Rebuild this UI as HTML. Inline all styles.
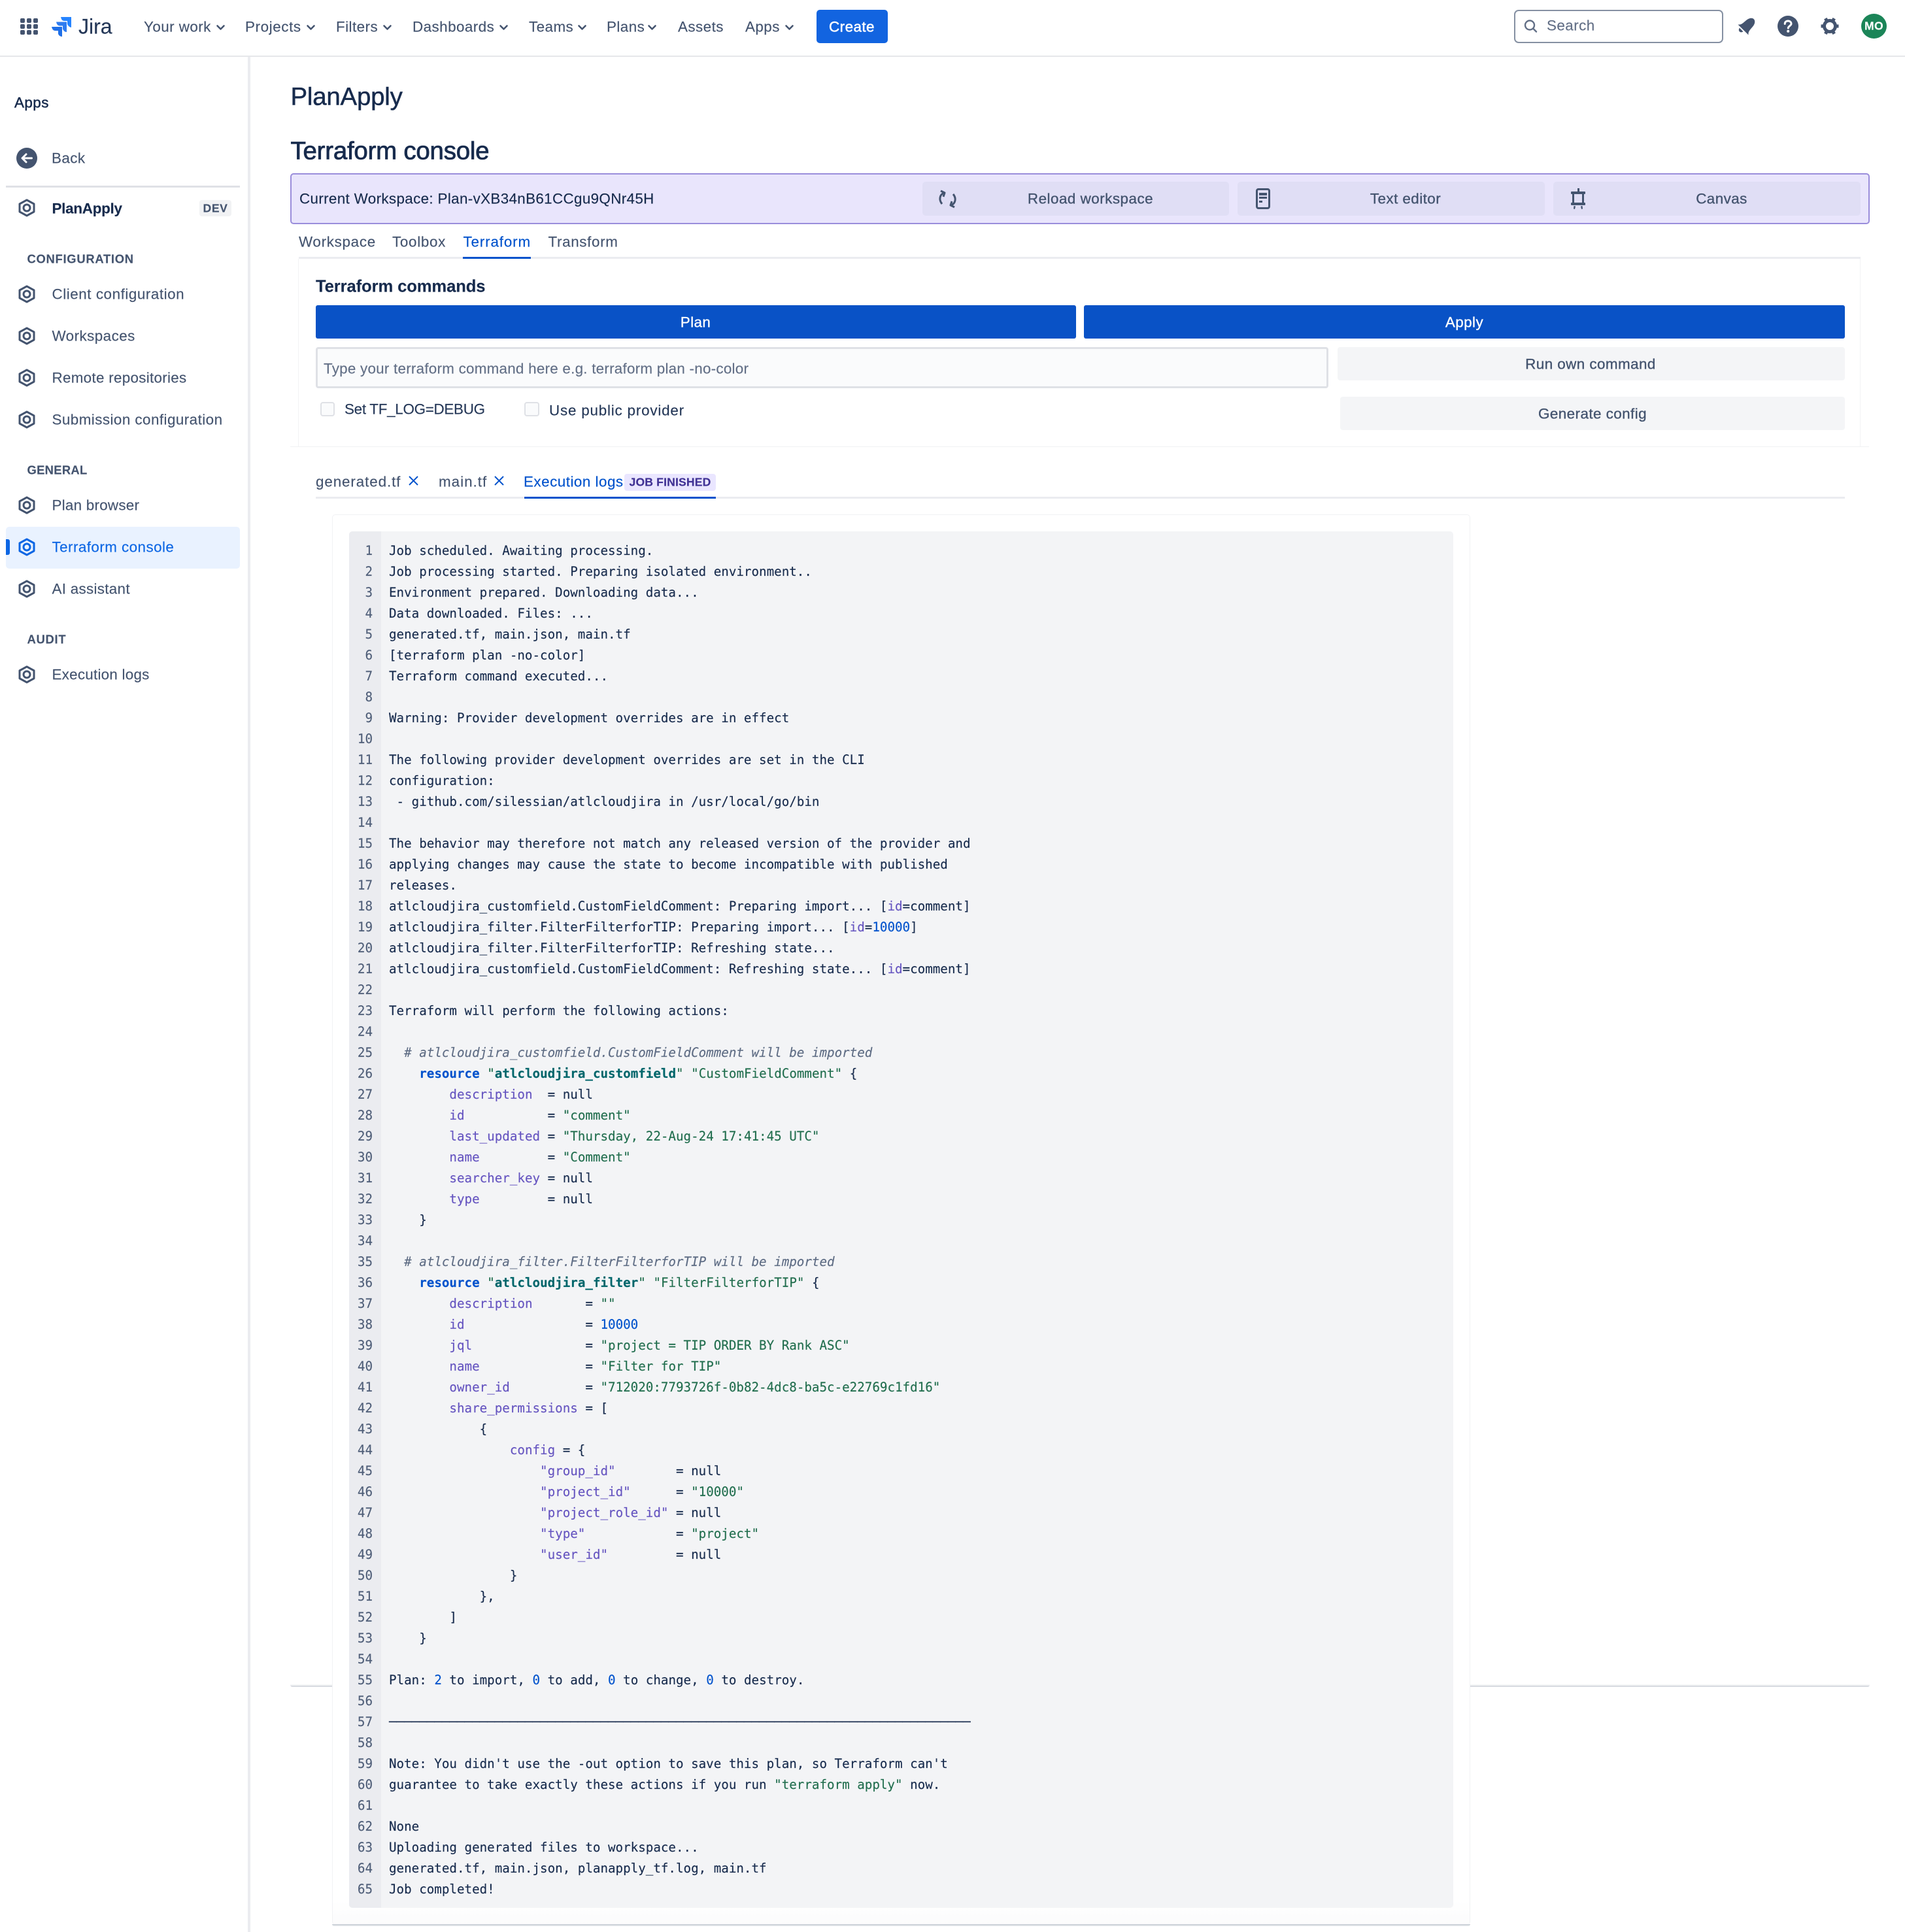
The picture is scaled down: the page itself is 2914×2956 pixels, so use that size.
<!DOCTYPE html>
<html lang="en"><head><meta charset="utf-8"><title>Terraform console</title>
<style>
html,body{margin:0;padding:0;background:#fff}
#r{position:relative;width:2914px;height:2956px;overflow:hidden;background:#fff;font-family:"Liberation Sans",sans-serif;font-size:22.4px;letter-spacing:.45px;color:#44546f;-webkit-text-stroke:.15px currentColor}
.b{position:absolute;box-sizing:border-box}
.t{position:absolute;white-space:nowrap;line-height:1;transform:translateY(calc(-50% + .5px))}
.c{position:absolute;white-space:nowrap;line-height:1;transform:translate(-50%,calc(-50% + .5px))}
.m{-webkit-text-stroke:.5px currentColor}
.h{color:#172b4d}
svg{position:absolute;overflow:visible}
.sec{font-size:18.4px;font-weight:700;letter-spacing:.72px}
.btn{background:#e0def5;border-radius:5px;top:278px;height:52px}
#code,#nums{position:absolute;top:827px;font-family:"DejaVu Sans Mono",monospace;font-size:19.2px;line-height:32px;letter-spacing:0;white-space:pre;margin:0}
#code{left:595px;color:#172b4d}
#nums{left:534px;width:36px;text-align:right;color:#505f79}
.s{color:#216e4e}.p{color:#6554c0}.n{color:#0052cc}.k{color:#0052cc;font-weight:700}.q{color:#00666b;font-weight:700}.o{color:#5e6c84;font-style:italic}
</style></head><body><div id="r">
<svg width="0" height="0" style="position:absolute"><defs>
<g id="hex"><path d="M13 2 L24 8 V20 L13 26 L2 20 V8 Z" fill="none" stroke="currentColor" stroke-width="3" stroke-linejoin="round"/><circle cx="13" cy="14" r="5" fill="none" stroke="currentColor" stroke-width="3"/></g>
<path id="chev" d="M1.5 1.5 L6.5 6.5 L11.5 1.5" fill="none" stroke="#44546f" stroke-width="2.6" stroke-linecap="round" stroke-linejoin="round"/>
<path id="x" d="M1 1 L14 14 M14 1 L1 14" fill="none" stroke="#0052cc" stroke-width="2"/>
</defs></svg>

<!-- top nav -->
<div class="b" style="left:0;top:85px;width:2914px;height:2px;background:#e6e7ea"></div>
<svg style="left:31px;top:28px" width="27" height="25" fill="#44546f">
<rect x="0" y="0" width="7" height="7" rx="2"/><rect x="10" y="0" width="7" height="7" rx="2"/><rect x="20" y="0" width="7" height="7" rx="2"/>
<rect x="0" y="9" width="7" height="7" rx="2"/><rect x="10" y="9" width="7" height="7" rx="2"/><rect x="20" y="9" width="7" height="7" rx="2"/>
<rect x="0" y="18" width="7" height="7" rx="2"/><rect x="10" y="18" width="7" height="7" rx="2"/><rect x="20" y="18" width="7" height="7" rx="2"/>
</svg>
<svg style="left:79px;top:26px" width="30" height="30" viewBox="0 0 30 30">
<path d="M14 0 H30 V16 Q26 15.5 24 11 V6 H19 Q15 6 14 0Z" fill="#2684ff"/>
<path d="M7 7.500 H23 V23 Q19 23 17 18.500 V13.500 H12 Q8 13 7 7.500Z" fill="#2f7cf0"/>
<path d="M0 15 H16 V30 Q12 30 10 26 V21 H5 Q1 20.500 0 15Z" fill="#1f6fe8"/>
</svg>
<div class="t" style="left:120px;top:40px;font-size:32px;letter-spacing:0;color:#253858">Jira</div>

<div class="t" style="left:220px;top:41px">Your work</div><svg style="left:331px;top:38px" width="13" height="8"><use href="#chev"/></svg>
<div class="t" style="left:375px;top:41px;letter-spacing:.6px">Projects</div><svg style="left:469px;top:38px" width="13" height="8"><use href="#chev"/></svg>
<div class="t" style="left:514px;top:41px">Filters</div><svg style="left:586px;top:38px" width="13" height="8"><use href="#chev"/></svg>
<div class="t" style="left:631px;top:41px">Dashboards</div><svg style="left:764px;top:38px" width="13" height="8"><use href="#chev"/></svg>
<div class="t" style="left:809px;top:41px">Teams</div><svg style="left:884px;top:38px" width="13" height="8"><use href="#chev"/></svg>
<div class="t" style="left:928px;top:41px">Plans</div><svg style="left:991px;top:38px" width="13" height="8"><use href="#chev"/></svg>
<div class="t" style="left:1037px;top:41px">Assets</div>
<div class="t" style="left:1140px;top:41px">Apps</div><svg style="left:1201px;top:38px" width="13" height="8"><use href="#chev"/></svg>
<div class="b" style="left:1249px;top:15px;width:109px;height:51px;background:#1264e0;border-radius:5px"></div>
<div class="c m" style="left:1303px;top:41px;color:#fff">Create</div>

<div class="b" style="left:2316px;top:15px;width:320px;height:51px;border:2px solid #8590a2;border-radius:7px"></div>
<svg style="left:2331px;top:30px" width="22" height="20" fill="none" stroke="#626f86" stroke-width="2.400"><circle cx="9" cy="8.500" r="7"/><path d="M14 13.500 L19 18.500" stroke-linecap="round"/></svg>
<div class="t" style="left:2366px;top:39px;color:#626f86">Search</div>
<svg style="left:2656px;top:26px" width="30" height="28" viewBox="0 0 30 28" fill="#44546f"><g transform="translate(10.500 19.500) rotate(45)"><path d="M-11.400 0 C-7 -3 -7.500 -8 -7 -13 C-6.500 -20 -3 -23 0 -23 C3 -23 6.500 -20 7 -13 C7.500 -8 7 -3 11.400 0 Z"/><path d="M-6 2 H2 Q1 6 -2 6 Q-5 6 -6 2Z"/></g></svg>
<svg style="left:2719px;top:24px" width="32" height="32" viewBox="0 0 32 32"><circle cx="16" cy="16" r="16" fill="#44546f"/><path d="M11.200 12.500 C11.200 9.500 13.500 8 16 8 C18.800 8 21 9.800 21 12.300 C21 15.500 16.300 15.800 16.300 19" fill="none" stroke="#fff" stroke-width="3" stroke-linecap="round"/><circle cx="16.200" cy="23.800" r="2" fill="#fff"/></svg>
<svg style="left:2785px;top:26px" width="28" height="28" viewBox="0 0 28 28"><circle cx="14" cy="14" r="8.500" fill="none" stroke="#44546f" stroke-width="5"/><g stroke="#44546f" stroke-width="5"><path d="M0.500 14 H4"/><path d="M24 14 H27.500"/><path d="M7.250 2.300 L9 5.300"/><path d="M19 22.700 L20.750 25.700"/><path d="M7.250 25.700 L9 22.700"/><path d="M19 5.300 L20.750 2.300"/></g></svg>
<div class="b" style="left:2847px;top:21px;width:39px;height:38px;border-radius:50%;background:#1b8558"></div>
<div class="c" style="left:2866.500px;top:40px;color:#fff;font-size:17.600px;font-weight:700;letter-spacing:.3px">MO</div>

<!-- sidebar -->
<div class="b" style="left:379px;top:87px;width:4px;height:2869px;background:#ebecf0"></div>
<div class="t h m" style="left:22px;top:157px">Apps</div>
<svg style="left:25px;top:226px" width="32" height="32" viewBox="0 0 32 32"><circle cx="16" cy="16" r="16" fill="#44546f"/><path d="M23.500 16 H10 M15 10 L9 16 L15 22" fill="none" stroke="#fff" stroke-width="3" stroke-linecap="round" stroke-linejoin="round"/></svg>
<div class="t" style="left:79px;top:242px">Back</div>
<div class="b" style="left:9px;top:284px;width:358px;height:3px;background:#dfe1e6"></div>

<svg style="left:28px;top:304px;color:#44546f" width="26" height="28"><use href="#hex"/></svg>
<div class="t h" style="left:79.500px;top:319px;font-weight:700;letter-spacing:-.25px">PlanApply</div>
<div class="b" style="left:305px;top:306px;width:49px;height:25px;background:#f1f2f4;border-radius:4px"></div>
<div class="c" style="left:329.500px;top:319px;font-size:17.600px;font-weight:700;letter-spacing:.6px">DEV</div>

<div class="t sec" style="left:41.500px;top:396px">CONFIGURATION</div>
<svg style="left:28px;top:436px;color:#44546f" width="26" height="28"><use href="#hex"/></svg><div class="t" style="left:79.500px;top:450px;letter-spacing:.55px">Client configuration</div>
<svg style="left:28px;top:500px;color:#44546f" width="26" height="28"><use href="#hex"/></svg><div class="t" style="left:79.500px;top:514px">Workspaces</div>
<svg style="left:28px;top:564px;color:#44546f" width="26" height="28"><use href="#hex"/></svg><div class="t" style="left:79.500px;top:578px;letter-spacing:.3px">Remote repositories</div>
<svg style="left:28px;top:628px;color:#44546f" width="26" height="28"><use href="#hex"/></svg><div class="t" style="left:79.500px;top:642px">Submission configuration</div>
<div class="t sec" style="left:41.500px;top:719px;letter-spacing:.3px">GENERAL</div>
<svg style="left:28px;top:759px;color:#44546f" width="26" height="28"><use href="#hex"/></svg><div class="t" style="left:79.500px;top:773px;letter-spacing:.25px">Plan browser</div>
<div class="b" style="left:9px;top:806px;width:358px;height:64px;background:#e9f2ff;border-radius:5px"></div>
<div class="b" style="left:9px;top:825px;width:6px;height:24px;background:#0c66e4;border-radius:0 3px 3px 0"></div>
<svg style="left:28px;top:823px;color:#0c66e4" width="26" height="28"><use href="#hex"/></svg><div class="t" style="left:79.500px;top:837px;color:#0c66e4">Terraform console</div>
<svg style="left:28px;top:887px;color:#44546f" width="26" height="28"><use href="#hex"/></svg><div class="t" style="left:79.500px;top:901px;letter-spacing:.3px">AI assistant</div>
<div class="t sec" style="left:41.500px;top:978px">AUDIT</div>
<svg style="left:28px;top:1018px;color:#44546f" width="26" height="28"><use href="#hex"/></svg><div class="t" style="left:79.500px;top:1032px;letter-spacing:.25px">Execution logs</div>

<!-- main heading -->
<div class="t h m" style="left:444.500px;top:147.500px;font-size:38.400px;letter-spacing:-.2px">PlanApply</div>
<div class="t h m" style="left:444.500px;top:230.500px;font-size:38.400px;letter-spacing:-.2px;-webkit-text-stroke:.8px #172b4d">Terraform console</div>

<!-- workspace bar -->
<div class="b" style="left:444px;top:265px;width:2416px;height:78px;background:#e9e5fc;border:2px solid #9a8ddb;border-radius:5px"></div>
<div class="t h" style="left:458px;top:304px;letter-spacing:.35px">Current Workspace: Plan-vXB34nB61CCgu9QNr45H</div>
<div class="b btn" style="left:1411px;width:469px"></div>
<div class="b btn" style="left:1893px;width:470px"></div>
<div class="b btn" style="left:2376px;width:470px"></div>
<svg style="left:1435px;top:291px" width="29" height="27" viewBox="0 0 29 27" fill="none" stroke="#44546f" stroke-width="3"><path d="M6 21 C1 15 2 7 9 4"/><path d="M4 1 L10 4 L8 10" stroke-linejoin="round"/><path d="M23 6 C28 12 27 20 20 23"/><path d="M25 26 L19 23 L21 17" stroke-linejoin="round"/></svg>
<div class="c m" style="left:1668px;top:304px;-webkit-text-stroke:.35px #44546f;letter-spacing:.5px">Reload workspace</div>
<svg style="left:1921px;top:288px" width="22" height="32" viewBox="0 0 22 32"><rect x="1.500" y="1.500" width="19" height="29" rx="2.500" fill="none" stroke="#44546f" stroke-width="3"/><rect x="5" y="7" width="12" height="4" fill="#44546f"/><rect x="5" y="13" width="12" height="3" fill="#44546f"/><rect x="5" y="19" width="5" height="3" fill="#44546f"/></svg>
<div class="c m" style="left:2150px;top:304px;-webkit-text-stroke:.35px #44546f">Text editor</div>
<svg style="left:2403px;top:288px" width="22" height="32" viewBox="0 0 22 32" fill="#44546f"><rect x="10" y="0" width="3" height="6"/><rect x="0" y="5" width="22" height="4" rx="1"/><rect x="2" y="7" width="3" height="17"/><rect x="17" y="7" width="3" height="17"/><rect x="0" y="22" width="22" height="4" rx="1"/><path d="M4.500 27 L7 27.500 L6 32 L4 31.500Z M15 27.500 L17.500 27 L18 31.500 L16 32Z"/></svg>
<div class="c m" style="left:2633.500px;top:304px;-webkit-text-stroke:.35px #44546f">Canvas</div>

<!-- tabs -->
<div class="t" style="left:457px;top:370px;letter-spacing:.7px">Workspace</div>
<div class="t" style="left:600px;top:370px;letter-spacing:.7px">Toolbox</div>
<div class="t" style="left:708.500px;top:370px;color:#0052cc;letter-spacing:.85px">Terraform</div>
<div class="t" style="left:838.500px;top:370px;letter-spacing:.65px">Transform</div>
<div class="b" style="left:457px;top:393px;width:2389px;height:3px;background:#ebecf0"></div>
<div class="b" style="left:708px;top:393px;width:104px;height:3px;background:#0052cc"></div>

<!-- commands panel -->
<div class="b" style="left:456px;top:396px;width:2390px;height:288px;border:1px solid #f2f3f5;border-top:0;border-bottom:0"></div>
<div class="b" style="left:444px;top:683px;width:2415px;height:1px;background:#f0f1f3"></div>
<div class="t h" style="left:483px;top:439px;font-size:25.600px;font-weight:700;letter-spacing:-.1px">Terraform commands</div>
<div class="b" style="left:483px;top:467px;width:1163px;height:51px;background:#0952c6;border-radius:3px"></div>
<div class="c m" style="left:1064px;top:493px;color:#fff;-webkit-text-stroke:.35px #fff">Plan</div>
<div class="b" style="left:1658px;top:467px;width:1164px;height:51px;background:#0952c6;border-radius:3px"></div>
<div class="c m" style="left:2240px;top:493px;color:#fff;-webkit-text-stroke:.35px #fff">Apply</div>
<div class="b" style="left:483px;top:531px;width:1549px;height:63px;background:#fafbfc;border:3px solid #dfe1e6;border-radius:4px"></div>
<div class="t" style="left:495px;top:563.500px;color:#626f86;letter-spacing:.25px">Type your terraform command here e.g. terraform plan -no-color</div>
<div class="b" style="left:2046px;top:531px;width:776px;height:51px;background:#f4f5f7;border-radius:4px"></div>
<div class="c m" style="left:2433px;top:557px;-webkit-text-stroke:.35px #44546f">Run own command</div>
<div class="b" style="left:2050px;top:607px;width:772px;height:51px;background:#f4f5f7;border-radius:4px"></div>
<div class="c m" style="left:2436px;top:633px;-webkit-text-stroke:.35px #44546f">Generate config</div>
<div class="b" style="left:490px;top:615px;width:22px;height:22px;background:#fafbfc;border:2.500px solid #dfe1e6;border-radius:4px"></div>
<div class="t" style="left:527px;top:626px;color:#253858;letter-spacing:-.28px">Set TF_LOG=DEBUG</div>
<div class="b" style="left:802px;top:615px;width:23px;height:22px;background:#fafbfc;border:2.500px solid #dfe1e6;border-radius:4px"></div>
<div class="t" style="left:840px;top:627.500px;color:#253858;letter-spacing:.8px">Use public provider</div>

<!-- sub tabs -->
<div class="t" style="left:483px;top:736.500px;letter-spacing:.9px">generated.tf</div>
<svg style="left:625px;top:728px" width="15" height="15"><use href="#x"/></svg>
<div class="t" style="left:671px;top:736.500px;letter-spacing:1px">main.tf</div>
<svg style="left:756px;top:728px" width="15" height="15"><use href="#x"/></svg>
<div class="t" style="left:801px;top:736.500px;color:#0052cc;letter-spacing:.5px">Execution logs</div>
<div class="b" style="left:955px;top:725px;width:140px;height:26px;background:#eae6ff;border-radius:4px"></div>
<div class="c" style="left:1025px;top:738px;font-size:17.600px;font-weight:700;letter-spacing:.15px;color:#403294">JOB FINISHED</div>
<div class="b" style="left:483px;top:760px;width:2339px;height:3px;background:#ebecf0"></div>
<div class="b" style="left:802px;top:760px;width:293px;height:3px;background:#0052cc"></div>

<!-- horizontal rule behind card -->
<div class="b" style="left:444px;top:2577px;width:2416px;height:4px;background:linear-gradient(#fff,#ccd0d8);border-radius:0 0 3px 3px"></div>

<!-- code card -->
<div class="b" style="left:508px;top:787px;width:1741px;height:2158px;background:linear-gradient(#fff 2120px,#fbfbfc);border:1px solid #f1f2f4;border-bottom:0;border-radius:5px"></div>
<div class="b" style="left:508px;top:2944px;width:1741px;height:3px;background:linear-gradient(#c1c7d0,#eceef1);border-radius:0 0 3px 3px"></div>
<div class="b" style="left:534px;top:813px;width:1689px;height:2106px;background:#f3f4f6;border-radius:5px"></div>
<div class="b" style="left:534px;top:813px;width:49px;height:2106px;background:#ebecf0;border-radius:5px 0 0 5px"></div>
<pre id="nums">1
2
3
4
5
6
7
8
9
10
11
12
13
14
15
16
17
18
19
20
21
22
23
24
25
26
27
28
29
30
31
32
33
34
35
36
37
38
39
40
41
42
43
44
45
46
47
48
49
50
51
52
53
54
55
56
57
58
59
60
61
62
63
64
65</pre>
<pre id="code">Job scheduled. Awaiting processing.
Job processing started. Preparing isolated environment..
Environment prepared. Downloading data...
Data downloaded. Files: ...
generated.tf, main.json, main.tf
[terraform plan -no-color]
Terraform command executed...

Warning: Provider development overrides are in effect

The following provider development overrides are set in the CLI
configuration:
 - github.com/silessian/atlcloudjira in /usr/local/go/bin

The behavior may therefore not match any released version of the provider and
applying changes may cause the state to become incompatible with published
releases.
atlcloudjira_customfield.CustomFieldComment: Preparing import... [<span class="p">id</span>=comment]
atlcloudjira_filter.FilterFilterforTIP: Preparing import... [<span class="p">id</span>=<span class="n">10000</span>]
atlcloudjira_filter.FilterFilterforTIP: Refreshing state...
atlcloudjira_customfield.CustomFieldComment: Refreshing state... [<span class="p">id</span>=comment]

Terraform will perform the following actions:

  <span class="o"># atlcloudjira_customfield.CustomFieldComment will be imported</span>
    <span class="k">resource</span> <span class="s">"</span><span class="q">atlcloudjira_customfield</span><span class="s">"</span> <span class="s">"CustomFieldComment"</span> {
        <span class="p">description</span>  = null
        <span class="p">id</span>           = <span class="s">"comment"</span>
        <span class="p">last_updated</span> = <span class="s">"Thursday, 22-Aug-24 17:41:45 UTC"</span>
        <span class="p">name</span>         = <span class="s">"Comment"</span>
        <span class="p">searcher_key</span> = null
        <span class="p">type</span>         = null
    }

  <span class="o"># atlcloudjira_filter.FilterFilterforTIP will be imported</span>
    <span class="k">resource</span> <span class="s">"</span><span class="q">atlcloudjira_filter</span><span class="s">"</span> <span class="s">"FilterFilterforTIP"</span> {
        <span class="p">description</span>       = <span class="s">""</span>
        <span class="p">id</span>                = <span class="n">10000</span>
        <span class="p">jql</span>               = <span class="s">"project = TIP ORDER BY Rank ASC"</span>
        <span class="p">name</span>              = <span class="s">"Filter for TIP"</span>
        <span class="p">owner_id</span>          = <span class="s">"712020:7793726f-0b82-4dc8-ba5c-e22769c1fd16"</span>
        <span class="p">share_permissions</span> = [
            {
                <span class="p">config</span> = {
                    <span class="p">"group_id"</span>        = null
                    <span class="p">"project_id"</span>      = <span class="s">"10000"</span>
                    <span class="p">"project_role_id"</span> = null
                    <span class="p">"type"</span>            = <span class="s">"project"</span>
                    <span class="p">"user_id"</span>         = null
                }
            },
        ]
    }

Plan: <span class="n">2</span> to import, <span class="n">0</span> to add, <span class="n">0</span> to change, <span class="n">0</span> to destroy.

─────────────────────────────────────────────────────────────────────────────

Note: You didn't use the -out option to save this plan, so Terraform can't
guarantee to take exactly these actions if you run <span class="s">"terraform apply"</span> now.

None
Uploading generated files to workspace...
generated.tf, main.json, planapply_tf.log, main.tf
Job completed!</pre>
</div></body></html>
